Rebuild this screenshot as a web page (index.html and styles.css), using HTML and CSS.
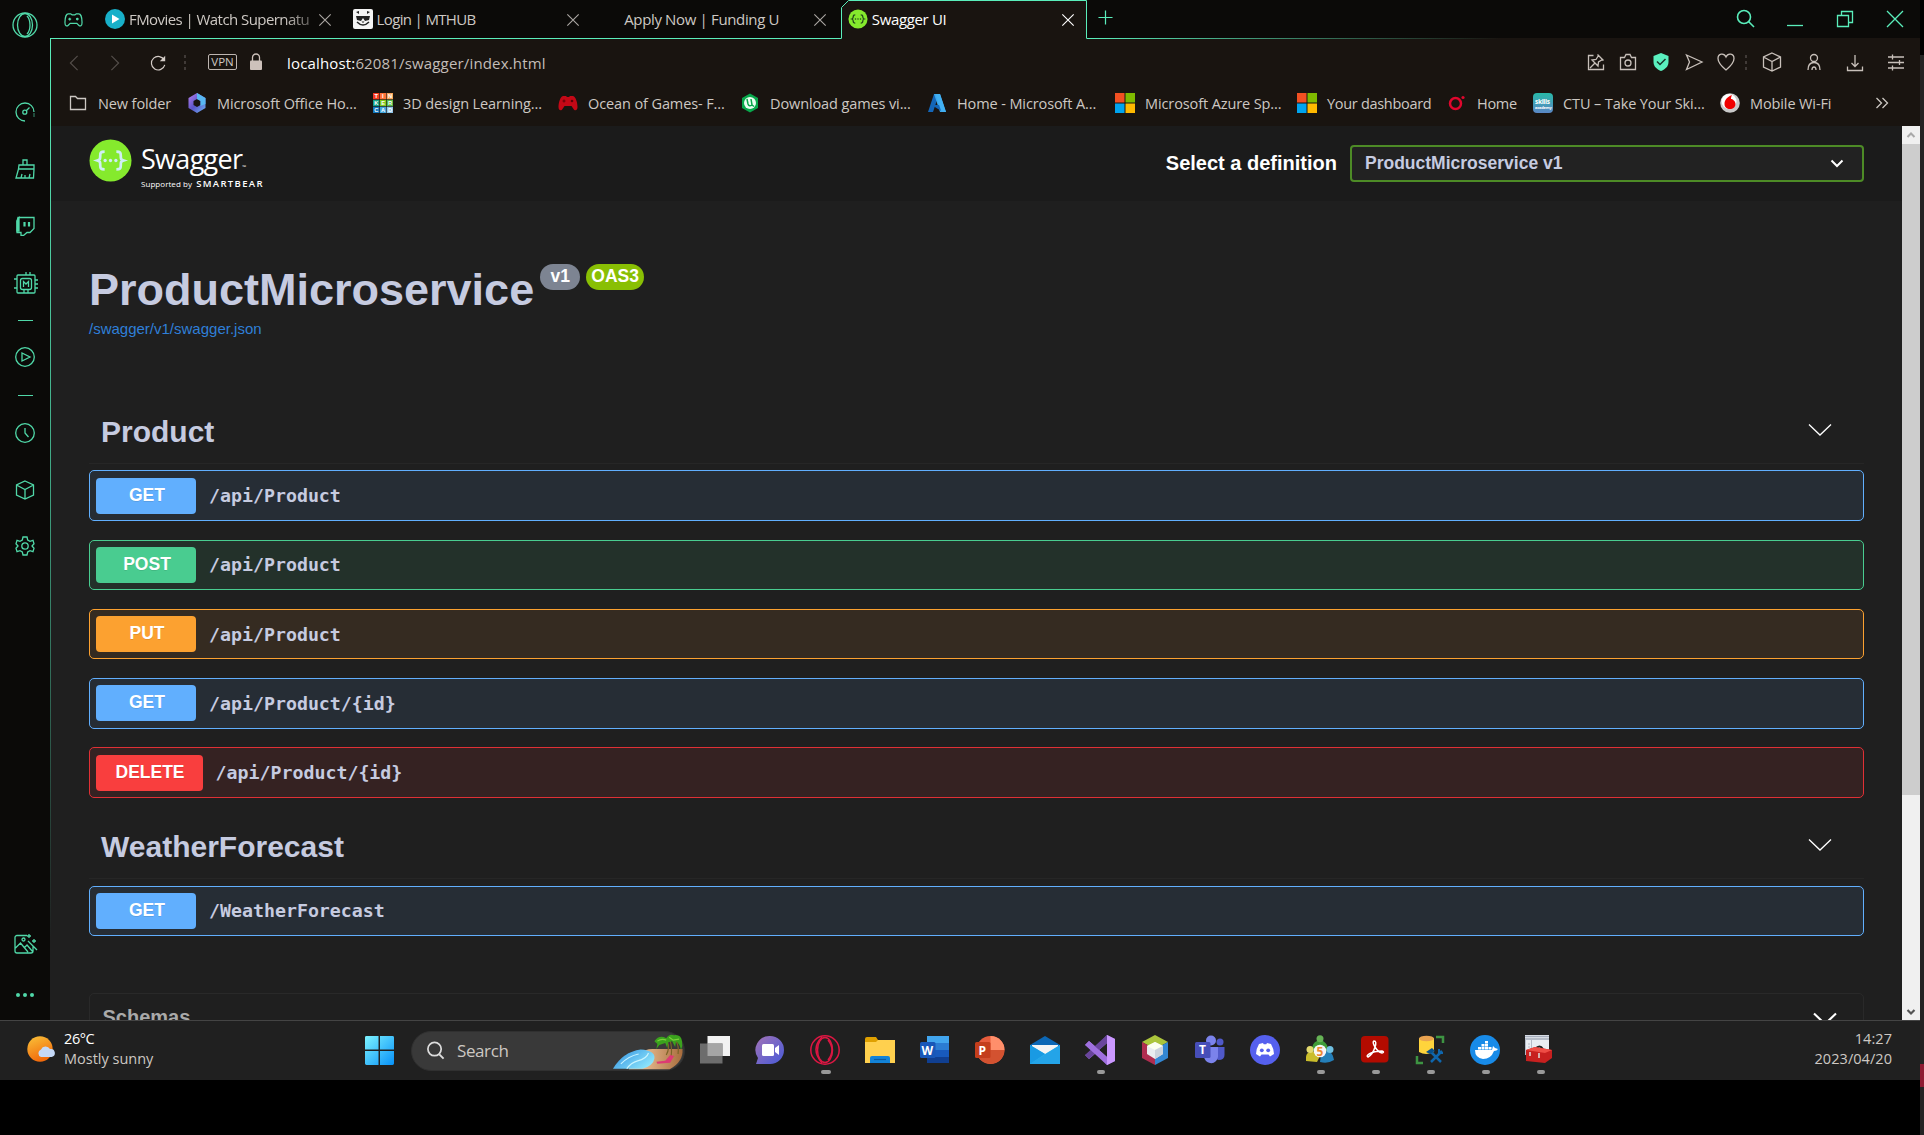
FILE: index.html
```html
<!DOCTYPE html>
<html lang="en">
<head>
<meta charset="utf-8">
<title>Swagger UI</title>
<link rel="stylesheet" href="styles.css">
</head>
<body>
<svg class="defs" width="0" height="0">
  <symbol id="x" viewBox="0 0 16 16"><path d="M1.500 1.500l13 13M14.500 1.500l-13 13"/></symbol>
  <symbol id="cube" viewBox="0 0 20 20"><path d="M10 1l8.500 4v10L10 19l-8.500-4V5zM1.500 5L10 9.500 18.500 5M10 9.500V19"/></symbol>
  <symbol id="chev" viewBox="0 0 24 14"><path d="M1 1.500l11 10.500L23 1.500"/></symbol>
  <symbol id="pad" viewBox="0 0 20 20"><path d="M5 3h3l1 1h2l1-1h3c3 1 4.500 7 4.500 11 0 4-3 4-4 2l-2-3H6.500l-2 3c-1 2-4 2-4-2C.5 10 2 4 5 3z"/></symbol>
  <symbol id="ms" viewBox="0 0 20 20"><path fill="#f25022" d="M0 0h9.500v9.500H0z"/><path fill="#7fba00" d="M10.500 0H20v9.500h-9.500z"/><path fill="#00a4ef" d="M0 10.500h9.500V20H0z"/><path fill="#ffb900" d="M10.500 10.500H20V20h-9.500z"/></symbol>
  <symbol id="braces" viewBox="0 0 44 44"><path d="M16 13c-4 0-4.500 1-4.500 4 0 3.500 0 4-3 5 3 1 3 1.500 3 5 0 3 .5 4 4.500 4M28 13c4 0 4.500 1 4.500 4 0 3.500 0 4 3 5-3 1-3 1.500-3 5 0 3-.5 4-4.500 4" fill="none" stroke="currentColor" stroke-width="2.800"/><g fill="currentColor"><circle cx="16.500" cy="22" r="1.700"/><circle cx="22" cy="22" r="1.700"/><circle cx="27.500" cy="22" r="1.700"/></g></symbol>
</svg>
<div class="screen">
<div class="desktop">
  <div class="browser">
    <nav class="sidebar">
      <svg class="line s-opera" viewBox="0 0 26 26"><circle cx="13" cy="13" r="12"/><ellipse cx="13" cy="13" rx="7.500" ry="11.500"/><path d="M15 4c4 4 4 14 0 18"/></svg>
      <svg class="line" viewBox="0 0 20 20"><path d="M10 19A9 9 0 1 1 19 10M11.200 8.800L14.500 5.500"/><circle cx="9.800" cy="10.200" r="2"/><path d="M19 11.500v4" stroke-dasharray="1 1"/></svg>
      <svg class="line" viewBox="0 0 20 20"><path d="M8 6V1h4v5M4 6h15v4H3.500zM3.500 10L1 19h17.500l.5-9M6 19l1-4M10 19v-3M14 19l1-4"/></svg>
      <svg class="line" viewBox="0 0 20 20"><path d="M3 1.500h16v11l-4 4h-3l-3.500 3H6v-3H2V5z"/><path d="M2 5l2-3v13H2z" fill="currentColor"/><path d="M9.500 6v4.500M14 6v4.500" stroke-width="2.200"/></svg>
      <svg class="line s-chip" viewBox="0 0 24 24"><rect x="3" y="3" width="18" height="18" rx="1"/><rect x="6.500" y="6.500" width="11" height="11" rx="2"/><path d="M9.500 15V9.500L12 12l2.500-2.500V15M12 3V0M16 3V0M0 7h3M0 16h3M21 8h3M21 12h3M21 16h3M10 21v-3M14 21v-3"/></svg>
      <i class="dash"></i>
      <svg class="line" viewBox="0 0 20 20"><circle cx="10" cy="10" r="9.300"/><path d="M7 6v8l8-4z"/></svg>
      <i class="dash"></i>
      <svg class="line" viewBox="0 0 20 20"><circle cx="10" cy="10" r="9.300"/><path d="M10 5v5l3.500 4"/></svg>
      <svg class="line"><use href="#cube"/></svg>
      <svg class="line" viewBox="0 0 20 20"><path d="M8 1h4l.7 3L15 5.300l3-1 1 3.500L17 10l2 2.200-1 3.500-3-1-2.300 1.300L12 19H8l-.7-3L5 14.700l-3 1-1-3.500L3 10 1 7.800l1-3.500 3 1L7.300 4z"/><circle cx="10" cy="10" r="3.200"/></svg>
      <span></span>
      <svg class="line s-pic" viewBox="0 0 24 20"><path d="M13 1.500H3a2 2 0 0 0-2 2V17a2 2 0 0 0 2 2h14a2 2 0 0 0 2-2V12M1.500 14l5-5L14 18M10 14l3-3 6 7M14 7l9 9M15 0v4M13 2h4M20 5v4M18 7h4"/><circle cx="9.500" cy="5.500" r="1.500"/></svg>
      <svg viewBox="0 0 20 20" fill="currentColor"><circle cx="3" cy="10" r="2"/><circle cx="10" cy="10" r="2"/><circle cx="17" cy="10" r="2"/></svg>
    </nav>
    <div class="main">
      <header class="tabs">
        <svg class="line gx" viewBox="0 0 20 16"><path d="M4.500 1.500h2.500l1.500 1h3l1.500-1h2.500c2 0 3.500 4 3.500 9 0 4-2 4.500-3.500 3l-2-2H6.500l-2 2C3 15 1 14.500 1 10.500c0-5 1.500-9 3.500-9zM6 5.500v3M4.500 7h3"/><circle cx="14" cy="7" r=".8"/></svg>
        <div class="tab"><svg class="fav" viewBox="0 0 20 20"><circle cx="10" cy="10" r="10" fill="#18b0c9"/><path d="M7 5.500v9l7.500-4.500z" fill="#fff"/></svg><span class="fade">FMovies | Watch Supernatu</span><svg class="line cl"><use href="#x"/></svg></div>
        <div class="tab"><svg class="fav" viewBox="0 0 20 20"><rect width="20" height="20" rx="2" fill="#f4f4f4"/><path d="M3 3l3-1v3zM17 3l-3-1v3zM3 7h14l-1 4-4 1-2-3-2 3-4-1z" fill="#222"/><path d="M4 13q6 6 12 0" fill="none" stroke="#222" stroke-width="1.500"/><path d="M8.500 12.500h3L10 14z" fill="#222"/></svg><span class="tight">Login | MTHUB</span><svg class="line cl"><use href="#x"/></svg></div>
        <div class="tab"><i class="fav"></i><span>Apply Now | Funding U</span><svg class="line cl"><use href="#x"/></svg></div>
        <div class="tab active"><svg class="frame" viewBox="0 0 246 39"><path d="M0 39V38.500H.5V7.500L7.500.5H245.500V38.500H246V39z"/><path class="edge" d="M.5 38.500V7.500L7.500.5H245.500V38.500"/></svg><svg class="fav dark" viewBox="0 0 44 44"><circle cx="22" cy="22" r="21" fill="#85ea2d"/><use href="#braces"/></svg><span>Swagger UI</span><svg class="line cl"><use href="#x"/></svg></div>
        <svg class="line plus" viewBox="0 0 16 16"><path d="M8 .5v15M.5 8h15"/></svg>
        <div class="winctl">
          <svg class="line" viewBox="0 0 20 20"><circle cx="9" cy="8" r="6.500" stroke-width="1.600"/><path d="M13.500 12.500L19 18" stroke-width="1.600"/></svg>
          <svg class="line" viewBox="0 0 20 20"><path d="M2 16.500h16"/></svg>
          <svg class="line" viewBox="0 0 20 20"><path d="M2.500 6.500h11v11h-11zM6.500 6.500v-4h11v11h-4"/></svg>
          <svg class="line" viewBox="0 0 20 20"><path d="M2 2l16 16M18 2L2 18"/></svg>
        </div>
      </header>
      <div class="address">
        <svg class="line dim" viewBox="0 0 20 20"><path d="M14 2L6 10l8 8"/></svg>
        <svg class="line dim" viewBox="0 0 20 20"><path d="M6 2l8 8-8 8"/></svg>
        <svg class="line reload" viewBox="0 0 20 20"><path d="M17 7a7.500 7.500 0 1 0 .5 5"/><path d="M18 2v6h-6z" fill="currentColor" stroke="none"/></svg>
        <i class="dots"></i>
        <b class="vpn">VPN</b>
        <svg class="lock" viewBox="0 0 14 18"><rect x="1" y="7.500" width="12" height="9.500" rx="1" fill="#cdc1bb"/><path d="M3.500 8V4.500a3.500 3.500 0 0 1 7 0V8" fill="none" stroke="#cdc1bb" stroke-width="1.300"/></svg>
        <span class="url"><em>localhost:</em>62081/swagger/index.html</span>
        <div class="tools">
          <svg class="line" viewBox="0 0 20 20"><path d="M7.500 3.500h-5v14h15v-5M11.500 2.500l6 6M12.500 3.500l-2.500 4-4 .5 6 6 .5-4 4-2.500M9 11l-5 5"/></svg>
          <svg class="line" viewBox="0 0 20 20"><path d="M2.500 5.500h4l1.500-3h4l1.500 3h4v12h-15z"/><circle cx="10" cy="11" r="3"/></svg>
          <svg viewBox="0 0 20 20"><path d="M10 1l7.500 3v6c0 5-4 7.500-7.500 9-3.500-1.500-7.500-4-7.500-9V4z" fill="#5af0bf"/><path d="M6 9.500l3 3 5.500-5.500" fill="none" stroke="#17352b" stroke-width="1.500"/></svg>
          <svg class="line" viewBox="0 0 20 20"><path d="M2.500 3L18 10 2.500 17.500 5.500 10z"/></svg>
          <svg class="line heart" viewBox="0 0 20 20"><path d="M10 18C4 13 2 10 2 6.500c0-5 6-6 8-1.500 2-4.500 8-3.500 8 1.500C18 10 16 13 10 18z"/></svg>
          <i class="dots"></i>
          <svg class="line"><use href="#cube"/></svg>
          <svg class="line" viewBox="0 0 20 20"><circle cx="10" cy="6" r="3.500"/><path d="M4 18c0-5 2-7.500 6-7.500s6 2.500 6 7.500M8 18c0-2 .5-3 2-3s2 1 2 3"/></svg>
          <svg class="line" viewBox="0 0 20 20"><path d="M10 3v11M6.500 11l3.500 3.500 3.500-3.500M2.500 14.500v4h15v-4"/></svg>
          <svg class="line" viewBox="0 0 20 20"><path d="M2 5h16M2 10.500h16M2 16h16M6.500 2.500v5M13.500 8v5M6.500 13.500v5"/></svg>
        </div>
      </div>
      <div class="bookmarks">
        <a><svg class="line" viewBox="0 0 20 20"><path d="M2.500 3.500h5l2 2h8v11h-15z"/></svg><span class="w73">New folder</span></a>
        <a><svg viewBox="0 0 20 20"><defs><linearGradient id="o1" x2="1" y2="1"><stop stop-color="#b980f0"/><stop offset=".5" stop-color="#5b55c8"/><stop offset="1" stop-color="#6db7f5"/></linearGradient></defs><path d="M10 0l8.500 5v10L10 20l-8.500-5V5zM10 6L6.500 8v4l3.500 2 3.500-2V8z" fill="url(#o1)" fill-rule="evenodd"/><path d="M10 0l8.500 5v6l-5 2V8L10 6z" fill="#58b7f2"/></svg><span class="w140">Microsoft Office Ho...</span></a>
        <a><svg class="tinker" viewBox="0 0 21 21"><path fill="#f33a1f" d="M0 0h6.600v6.600H0z"/><path fill="#ff7139" d="M7.200 0h6.600v6.600H7.200z"/><path fill="#f8a55b" d="M14.400 0H21v6.600h-6.600z"/><path fill="#16a085" d="M0 7.200h6.600v6.600H0z"/><path fill="#82c91e" d="M7.200 7.200h6.600v6.600H7.200z"/><path fill="#55b948" d="M14.400 7.200H21v6.600h-6.600z"/><path fill="#1477be" d="M0 14.400h6.600V21H0z"/><path fill="#42a5dd" d="M7.200 14.400h6.600V21H7.200z"/><path fill="#90c5e8" d="M14.400 14.400H21V21h-6.600z"/><g><text x="1.500" y="5.500">T</text><text x="9.500" y="5.500">I</text><text x="15.700" y="5.500">N</text><text x="1.300" y="12.700">K</text><text x="8.700" y="12.700">E</text><text x="15.700" y="12.700">R</text><text x="1.300" y="19.900">C</text><text x="8.500" y="19.900">A</text><text x="15.700" y="19.900">D</text></g></svg><span class="w139">3D design Learning...</span></a>
        <a><svg viewBox="0 0 20 20"><g fill="#c40816"><use href="#pad"/></g><path d="M4.500 8h3M6 6.500v3" stroke="#5e0008"/><circle cx="14" cy="8" r="1.300" fill="#5e0008"/></svg><span class="w137">Ocean of Games- F...</span></a>
        <a><svg viewBox="0 0 20 20"><path d="M10 .5l8 4.500v10l-8 4.500L2 15V5z" fill="#08a84c"/><circle cx="10" cy="10" r="6" fill="#eafff1"/><path d="M7 6l1 5q1 3 4 1l-1-6M12 12l2 1.500" fill="none" stroke="#08a84c" stroke-width="1.500"/></svg><span class="w141">Download games vi...</span></a>
        <a><svg viewBox="0 0 20 20"><path d="M7 1h5l-6 18H1z" fill="#1466b8"/><path d="M7 1h6l6 18h-6z" fill="#3ba7ee"/><path d="M5 12h9l2 7-9-5.500z" fill="#1466b8"/><path d="M10 6l4.500 13H19L13 1H8.500z" fill="#42b0f2"/></svg><span class="w143">Home - Microsoft A...</span></a>
        <a><svg><use href="#ms"/></svg><span class="w136">Microsoft Azure Sp...</span></a>
        <a><svg><use href="#ms"/></svg><span class="w104">Your dashboard</span></a>
        <a><svg viewBox="0 0 20 20"><circle cx="8.500" cy="10.500" r="5.500" fill="none" stroke="#e0062d" stroke-width="2.500"/><circle cx="16" cy="4.500" r="1.600" fill="#e0062d"/></svg><span class="w40">Home</span></a>
        <a><svg viewBox="0 0 20 20"><defs><linearGradient id="c1" x2="0" y2="1"><stop stop-color="#28b9a8"/><stop offset="1" stop-color="#5b86c5"/></linearGradient></defs><rect width="20" height="20" rx="4" fill="url(#c1)"/><text x="2" y="11" class="sk">skills</text><text x="2" y="16" class="ac">academy</text></svg><span class="w141">CTU – Take Your Ski...</span></a>
        <a><svg viewBox="0 0 20 20"><circle cx="10" cy="10" r="9.800" fill="#c9c9c9"/><circle cx="9" cy="8.500" r="7.500" fill="#fff"/><path d="M12 2c-5 2-7.500 5-7.500 9 0 3.500 2.500 5 5.500 5s5.500-2 5.500-5c0-3-3-5-4.500-5 0-2 .5-3 1-4z" fill="#f00000"/></svg><span class="w85">Mobile Wi-Fi</span></a>
        <svg class="line more" viewBox="0 0 14 12"><path d="M1.500 1l5 5-5 5M7.500 1l5 5-5 5"/></svg>
      </div>
      <div class="viewport">
        <div class="page">
          <div class="topbar">
            <div class="logo">
              <svg class="mark" viewBox="0 0 44 44"><circle cx="22" cy="22" r="21.500" fill="#85ea2d"/><use href="#braces"/></svg>
              <div class="word"><strong>Swagger<small>™</small></strong><span>Supported by <b>SMARTBEAR</b></span></div>
            </div>
            <div class="definition"><label>Select a definition</label><div class="select">ProductMicroservice v1<svg viewBox="0 0 14 9"><path d="M1.500 1.500L7 7l5.500-5.500" fill="none" stroke="#fff" stroke-width="2"/></svg></div></div>
          </div>
          <div class="content">
            <div class="info"><h1>ProductMicroservice</h1><span class="ver">v1</span><span class="ver oas">OAS3</span></div>
            <a class="spec">/swagger/v1/swagger.json</a>
            <section>
              <h2>Product<svg class="line"><use href="#chev"/></svg></h2>
              <div class="op get"><b>GET</b><code>/api/Product</code></div>
              <div class="op post"><b>POST</b><code>/api/Product</code></div>
              <div class="op put"><b>PUT</b><code>/api/Product</code></div>
              <div class="op get"><b>GET</b><code>/api/Product/{id}</code></div>
              <div class="op delete"><b>DELETE</b><code>/api/Product/{id}</code></div>
            </section>
            <section class="weather">
              <h2>WeatherForecast<svg class="line"><use href="#chev"/></svg></h2>
              <div class="op get"><b>GET</b><code>/WeatherForecast</code></div>
            </section>
            <div class="schemas">Schemas<svg class="line"><use href="#chev"/></svg></div>
          </div>
        </div>
        <div class="scroll"><svg viewBox="0 0 18 18"><path d="M5.500 11L9 7.500l3.500 3.500" fill="none" stroke="#a9a9a9" stroke-width="2"/></svg><i></i><svg viewBox="0 0 18 18"><path d="M5.500 8L9 11.500 12.500 8" fill="none" stroke="#555" stroke-width="2.200"/></svg></div>
      </div>
    </div>
  </div>
  <footer class="taskbar">
    <div class="forecast">
      <svg viewBox="0 0 28 28"><defs><linearGradient id="s1" x2=".4" y2="1"><stop stop-color="#f9c33a"/><stop offset="1" stop-color="#f26b0c"/></linearGradient></defs><circle cx="13" cy="13" r="12.700" fill="url(#s1)"/><path d="M14 21a4 4 0 0 1 0-7.500 5 5 0 0 1 9-.5 4 4 0 0 1 1.500 8z" fill="#c5d9f8"/></svg>
      <div><span class="hi">26°C</span><span>Mostly sunny</span></div>
    </div>
    <svg class="start" viewBox="0 0 30 30"><defs><linearGradient id="w1" x2="1" y2="1"><stop stop-color="#7df3ff"/><stop offset="1" stop-color="#0791f8"/></linearGradient></defs><path fill="url(#w1)" d="M1.500 0H14v14H0V1.500Q0 0 1.500 0zM15.500 0h13Q30 0 30 1.500V14H15.500zM0 15.500h14V30H1.500Q0 30 0 28.500zM15.500 15.500H30v13q0 1.500-1.500 1.500h-13z"/></svg>
    <div class="search">
      <svg class="mag" viewBox="0 0 20 20"><circle cx="9" cy="8.500" r="7" fill="none" stroke="#ddd" stroke-width="1.800"/><path d="M14 14l4.500 4.500" stroke="#ddd" stroke-width="2"/></svg>
      <span>Search</span>
      <svg class="beach" viewBox="0 0 72 38"><defs><linearGradient id="b1" x2="1" y2=".6"><stop stop-color="#2d8ee0"/><stop offset="1" stop-color="#8ce4fb"/></linearGradient><linearGradient id="b2" x2="1"><stop stop-color="#ffd9b0"/><stop offset="1" stop-color="#a86c3c"/></linearGradient></defs><path d="M16 37.500Q25 17 40 17h30.500q1 13-13 20.500z" fill="url(#b2)"/><path d="M0 37Q10 20 28 17.500q15 1 14 9-1 7-12 10.500z" fill="url(#b1)"/><path d="M14 37q4-6 11-8 9-2 11-8M8 32q8-8 18-10" fill="none" stroke="#c9f4ff" stroke-width="1.200"/><path d="M54 23q4-7 1-14M66 22q1-8-2-13M59 24q1-9-1-15" fill="none" stroke="#7b6427" stroke-width="1.200"/><path d="M42 9q5-7 12-3 3-5 8-3 7-1 8 6 1 5-1 9-1-6-5-9l-1 6-3-6-4 1-1 6-2-5-6 2-3 4 1-5z" fill="#3ba21d"/><path d="M45 9q4-3 9-1M57 5l4 3 6-1" fill="none" stroke="#7bd03c" stroke-width="1.200"/><path d="M44 30l9-1 5-6 4 1-4 7-13 1" fill="#dd3b73"/></svg>
    </div>
    <div class="apps">
      <span><svg viewBox="0 0 30 30"><path fill="#f2f2f2" d="M7.500 1H30v20H7.500z"/><path fill="#6d6d6d" d="M0 8.500h22.500v20H0z"/><path fill="#a5a5a5" d="M7.500 8.500h15V21h-15z"/></svg></span>
      <span><svg viewBox="0 0 30 30"><defs><linearGradient id="m2" x2=".8" y2=".8"><stop stop-color="#a373b7"/><stop offset="1" stop-color="#595fd2"/></linearGradient></defs><path d="M15 1a14 14 0 0 1 0 28H1l2-6A14 14 0 0 1 15 1z" fill="url(#m2)"/><rect x="7" y="9" width="12" height="12" rx="1.500" fill="#fff"/><path d="M20 13l4-3v10l-4-3z" fill="#fff"/></svg></span>
      <span class="run wide"><svg viewBox="0 0 30 30" fill="none" stroke="#dc1743" stroke-width="1.500"><circle cx="15" cy="15" r="14.200"/><ellipse cx="15" cy="15" rx="7.500" ry="12.500"/><path d="M18 5q8 10 0 20M12 2Q0 14 12 28"/></svg></span>
      <span><svg viewBox="0 0 30 30"><path d="M0 4q0-2 2-2h9l2 3h15q2 0 2 2v5H0z" fill="#dfa000"/><path d="M0 7h11l2-2h17v23H0z" fill="#ffd04e"/><path d="M5 28v-5q0-2 2-2h16q2 0 2 2v5z" fill="#1283d8"/><path d="M9 24.500h12" stroke="#0b5aa0" stroke-width="1.200"/></svg></span>
      <span><svg viewBox="0 0 30 30"><path fill="#41a5ee" d="M7 1h22v7H7z"/><path fill="#2b7cd3" d="M7 8h22v7H7z"/><path fill="#185abd" d="M7 15h22v7H7z"/><path fill="#103f91" d="M7 22h22v6H7z"/><rect x="0" y="7" width="15.500" height="16" rx="1.500" fill="#1857b8"/><text x="1.500" y="19.500" class="g">W</text></svg></span>
      <span><svg viewBox="0 0 30 30"><circle cx="15.500" cy="15" r="14" fill="#e65c3c"/><path d="M15.500 1a14 14 0 0 1 14 14h-14z" fill="#ff8f6b"/><path d="M29.500 15a14 14 0 0 1-27 5l13-5z" fill="#d35230"/><rect x="0" y="7" width="15.500" height="16" rx="1.500" fill="#c43e1c"/><text x="3.500" y="19.500" class="g">P</text></svg></span>
      <span><svg viewBox="0 0 30 30"><path d="M15 1l15 9v3H0v-3z" fill="#0c67b5"/><path d="M2 10h26v9H2z" fill="#f4f4f4"/><path d="M0 10l15 9 15-9v19H0z" fill="#2bb7ee"/><path d="M30 10v19H0z" fill="#24a4e8"/><path d="M0 10l15 9-15 10z" fill="#199ae3"/></svg></span>
      <span class="run"><svg viewBox="0 0 30 30"><path d="M0 10l4-4 7 6L22 0l8 4v22l-8 4L11 18l-7 6-4-4 6-5z" fill="#a77be5"/><path d="M0 10l6 5-6 5zM22 8v14l-8-7z" fill="#212121"/><path d="M0 20l22-20v8L4 24z" fill="#69459c"/><path d="M4 6l18 16v8L0 10z" fill="#9f70df"/><path d="M22 0l8 4v22l-8 4z" fill="#cb98ff"/></svg></span>
      <span><svg viewBox="0 0 30 30"><path d="M15 0l13 7-13 7L2 7z" fill="#abc53c"/><path d="M2 7l13 7v16L2 23z" fill="#b02d50"/><path d="M28 7v16l-13 7V14z" fill="#3387d3"/><path d="M15 7l8 4v8l-8 5-8-5v-8z" fill="#e9edf0"/><path d="M15 7l8 4-8 4-8-4z" fill="#fbfff0"/><path d="M15 15l8-4v8l-8 5z" fill="#ccd4dd"/></svg></span>
      <span><svg viewBox="0 0 30 30"><circle cx="25" cy="7" r="3.500" fill="#5059c9"/><path d="M20 12h9.500v8q0 5-6 5l-4.500-2z" fill="#5059c9"/><circle cx="16" cy="5.500" r="5" fill="#7b83eb"/><path d="M9 12h14v10q-2 7-8 6-5-1-6-6z" fill="#7b83eb"/><rect x="0" y="7" width="15.500" height="16" rx="1.500" fill="#474eb8"/><text x="4" y="19" class="g">T</text></svg></span>
      <span><svg viewBox="0 0 30 30"><circle cx="15" cy="15" r="15" fill="#5560ee"/><path d="M9 9l4-1 .7 1.200h2.600L17 8l4 1q3 5 3 10l-4 2.500-1.500-2h-7l-1.500 2L6 19q0-5 3-10z" fill="#fff"/><circle cx="11.800" cy="15.300" r="1.900" fill="#5560ee"/><circle cx="18.200" cy="15.300" r="1.900" fill="#5560ee"/></svg></span>
      <span class="run"><svg viewBox="0 0 30 30"><path d="M7 15q0-7 5-9 3-2 6 0 5 3 5 9l-5 3h-6z" fill="#3f9b38"/><circle cx="15" cy="3.800" r="3.500" fill="#66b355"/><path d="M1 26q-1-8 4-9l6-1 4 5-3 6z" fill="#cabd2b"/><circle cx="5" cy="14.500" r="3.500" fill="#e3da6f"/><path d="M15 27l1-8 6-3q6 1 7 9-6 4-14 2z" fill="#247fb9"/><circle cx="25" cy="14.500" r="3.500" fill="#6fc0e2"/><circle cx="15" cy="16" r="6.300" fill="#f6f6f6"/><text x="11.500" y="20.500" class="g five">5</text></svg></span>
      <span class="run"><svg viewBox="0 0 30 30"><rect x="1" y="1" width="27.500" height="26.500" rx="4" fill="#b30b00"/><path d="M14 6q3 0 1 6-2 7-7 10-2-1 1-3 5-3 13-3 3 1 0 2-4-1-7-6-3-5-1-6z" fill="none" stroke="#fff" stroke-width="1.500"/></svg></span>
      <span class="run"><svg viewBox="0 0 30 30"><path d="M4 3v14q7 4 15 0V3z" fill="#ffd43c"/><ellipse cx="11.500" cy="3.500" rx="7.500" ry="2.800" fill="#e9a350"/><path d="M21 2h7v6M2 21v7h6" fill="none" stroke="#3d9442" stroke-width="2.500"/><path d="M16 27l11-11M15 16l11 11" stroke="#0f66ad" stroke-width="2.500"/><path d="M11 17l6-4 3 3-5 3z" fill="#064f8d"/><path d="M24 14v4h4" fill="none" stroke="#0f66ad" stroke-width="2"/></svg></span>
      <span class="run"><svg viewBox="0 0 30 30"><circle cx="15" cy="15" r="15" fill="#188be8"/><path d="M5 15h17l1-4 2 2 3 1q-1 2-4 2-3 8-11 8-8-1-8-9zM8 12h3v2.500H8zM11.500 12h3v2.500h-3zM15 12h3v2.500h-3zM18.500 12h3v2.500h-3zM11.500 9h3v2.500h-3zM15 9h3v2.500h-3zM15 6h3v2.500h-3z" fill="#fff"/></svg></span>
      <span class="run"><svg viewBox="0 0 30 30"><path d="M0 0h24v20H0z" fill="#e9edf2"/><path d="M0 1.500h24M0 4h24" stroke="#a5adbc" stroke-width="1.500"/><path d="M6.500 5v11M.5 5v15M3 9h2M3 12h2" stroke="#b4bac6"/><path d="M10 14q5-5 8 0" fill="none" stroke="#222" stroke-width="1.800"/><path d="M1 15l9-3 17 3v8l-7 5-19-2z" fill="#c7201f"/><path d="M1 15l9-3 17 3-7 3z" fill="#ee4d45"/><path d="M5 17v4M14 18v5" stroke="#ddd" stroke-width="1.500"/></svg></span>
    </div>
    <div class="clock"><span>14:27</span><span>2023/04/20</span></div>
  </footer>
</div>
<div class="rim"><i></i></div>
</div>
</body>
</html>
```
FILE: styles.css
```css
* { box-sizing: border-box; }
body { margin: 0; background: #000; font-family: "Open Sans", "Noto Sans", sans-serif; font-size: 15px; color: #cdc8c3; white-space: nowrap; overflow: hidden; }
svg { display: block; flex: none; }
.defs { position: absolute; }
.line { fill: none; stroke: currentColor; stroke-width: 1.3; }
.screen { display: flex; height: 1135px; }
.desktop { width: 1920px; display: flex; flex-direction: column; }
.rim { width: 4px; background: linear-gradient(#000 55px, #242424 55px); padding-top: 1064px; }
.rim i { display: block; height: 23px; background: #8e1b32; }
.browser { display: flex; height: 1020px; }

/* Opera GX sidebar */
.sidebar { width: 50px; padding-right: 1px; background: #0b0a08; color: #50d8a8; display: grid; grid-template-rows: 50px 91px 56px 57px 59px 14px 60px 16px 60px 54px 58px 1fr 53px 50px; justify-items: center; align-items: center; }
.sidebar svg { width: 20px; height: 20px; }
.sidebar svg:nth-child(2) { margin-top: 33px; }
.sidebar .s-opera { width: 26px; height: 26px; margin-left: 1px; }
.sidebar .s-chip { width: 24px; height: 24px; margin-left: 2px; }
.sidebar .s-pic { width: 24px; height: 20px; margin-left: 2px; }
.dash { width: 15px; height: 1px; background: #50d8a8; margin-left: 2px; }

/* Tabs */
.main { flex: 1; display: flex; flex-direction: column; background: #191410; position: relative; }
.main::before { content: ""; position: absolute; left: 0; top: 38px; width: 1px; height: 982px; background: linear-gradient(#5aeebb, #3fa583 45%, #1f1f1f 92%); z-index: 2; }
.tabs { height: 39px; display: flex; align-items: center; background: linear-gradient(90deg, #5aeebb 0, #5aeebb 1040px, #191410 1450px) bottom / 100% 1px no-repeat #0b0a08; }
.gx { width: 19px; height: 16px; margin: 0 15px 0 14px; color: #50d8a8; }
.tab { width: 246px; height: 39px; margin-right: 1.6px; padding: 0 12px 0 7px; display: flex; align-items: center; position: relative; }
.tab > * { position: relative; }
.fav { width: 20px; height: 20px; margin-right: 4px; margin-top: -1px; }
.tab span { flex: 1; letter-spacing: -.35px; margin-top: -2px; }
.tab .tight { letter-spacing: -.65px; }
.tab .fade { letter-spacing: -.56px; -webkit-mask-image: linear-gradient(90deg, #000 82%, rgba(0,0,0,.25)); mask-image: linear-gradient(90deg, #000 82%, rgba(0,0,0,.25)); }
.cl { width: 14px; height: 14px; color: #aaa6a2; }
.active { color: #fff; }
.active .cl { color: #fff; }
.tab .frame { position: absolute; inset: 0; width: 246px; height: 39px; fill: #191410; }
.frame .edge { fill: none; stroke: #5aeebb; }
.dark { color: #23491c; }
.plus { width: 15px; height: 15px; margin: -4px 0 0 10px; color: #5aeebb; }
.winctl { margin-left: auto; margin-right: 15px; display: grid; grid-template-columns: 50px 50px 50px 20px; color: #5aeebb; }
.winctl svg { width: 20px; height: 20px; margin-top: -1px; }

/* Address bar */
.address { height: 47px; display: flex; align-items: center; }
.address > svg { width: 18px; height: 18px; }
.address > svg:first-child { margin-left: 15px; margin-right: 23px; }
.dim { color: #544e4a; }
.reload { margin: 0 17px 0 25px; color: #d5cdc8; }
.dots { width: 2px; height: 15px; background: repeating-linear-gradient(#403a37 0 3px, transparent 3px 6px); }
.vpn { font-size: 11.500px; font-weight: 500; line-height: 14px; height: 16px; width: 29px; text-align: center; border: 1px solid #bdb5b0; border-radius: 2px; margin: -1px 0 0 22px; }
.address .lock { width: 14px; margin: -2px 0 0 12px; }
.url { margin-left: 24px; color: #c3bdb8; letter-spacing: .16px; }
.url em { font-style: normal; color: #fff; }
.tools { margin-left: auto; margin-right: 14px; margin-top: -1px; display: grid; grid-template-columns: 32.500px 33px 33px 32px 29px 17px 41.500px 41px 41.500px 20px; align-items: center; color: #c8c0ba; }
.tools svg { width: 20px; height: 20px; }
.tools .dots { margin-left: 0; }

/* Bookmarks */
.bookmarks { height: 40px; padding-bottom: 6px; padding-left: 18px; display: flex; align-items: center; gap: 16px; letter-spacing: -.11px; font-size: 14.500px; }
.bookmarks a { display: flex; align-items: center; gap: 10px; }
.bookmarks a svg { width: 20px; height: 20px; }
.bookmarks .more { width: 14px; height: 12px; margin-left: 24px; }
.w73 { width: 73px; } .w140 { width: 140px; } .w139 { width: 139px; } .w137 { width: 136px; } .w141 { width: 141px; } .w143 { width: 142px; } .w136 { width: 136px; } .w104 { width: 104px; letter-spacing: -.3px; } .w40 { width: 40px; letter-spacing: -.3px; } .w85 { width: 85px; }
.tinker text { font: bold 6px "Liberation Sans", sans-serif; fill: #fff; letter-spacing: 0; }
.sk { font: bold 6.500px "Open Sans", sans-serif; fill: #fff; letter-spacing: -.3px; }
.ac { font: bold 4px "Open Sans", sans-serif; fill: #fff; letter-spacing: -.2px; }

/* Swagger page */
.viewport { flex: 1; display: flex; min-height: 0; height: 894px; }
.page { flex: 1; overflow: hidden; height: 894px; background: #1f1f1f; font-family: "Liberation Sans", Arial, sans-serif; color: #c6cbe0; }
.topbar { height: 75px; background: #1b1b1b; padding: 0 38px 0 39px; display: flex; justify-content: space-between; }
.logo { display: flex; font-family: "Open Sans", sans-serif; color: #fff; }
.mark { width: 43px; height: 43px; margin: 13px 9px 0 0; color: #cfeef5; }
.word { display: flex; flex-direction: column; }
.word strong { font-size: 27px; font-weight: 400; letter-spacing: -.7px; line-height: 34px; margin-top: 16px; height: 34px; }
.word small { font-size: 5px; }
.word span { font-size: 8px; line-height: 14px; height: 14px; margin-top: 1px; letter-spacing: .05px; }
.word b { font-size: 9.500px; font-weight: 600; letter-spacing: 1.35px; margin-left: 2px; }
.definition { display: flex; align-items: center; gap: 13px; font-weight: 700; }
.definition label { font-size: 20px; color: #fff; }
.select { width: 514px; height: 37px; border: 2px solid #4d8b26; border-radius: 4px; background: #222; font-size: 17.500px; padding: 0 18px 1px 13px; display: flex; align-items: center; justify-content: space-between; }
.select svg { width: 14px; height: 9px; margin-top: 1px; }
.content { padding: 62px 38px 0 39px; }
.info { display: flex; align-items: flex-start; }
h1 { margin: 0 6px 0 0; font-size: 45px; line-height: 54px; height: 52px; }
.ver { height: 26px; width: 40px; border-radius: 13px; background: #7d8492; color: #fff; font-weight: 700; font-size: 17.500px; line-height: 24px; text-align: center; margin: 1px 6px 0 0; }
.oas { width: 58px; background: #89bf04; }
.spec { display: block; font-size: 15px; line-height: 18px; margin-top: 5px; color: #2f7fd8; }
h2 { margin: 0; font-size: 30px; line-height: 34px; height: 49px; padding: 0 33px 14px 12px; display: flex; justify-content: space-between; align-items: center; border-bottom: 1px solid #262626; margin-bottom: 6.400px; }
h2 svg, .schemas svg { width: 24px; height: 14px; color: #fff; stroke-width: 2.100; }
h2 svg { margin-top: -4px; margin-right: -1px; }
section { padding-top: 77px; }
.weather { padding-top: 13.500px; }
.op { height: 50.500px; margin-bottom: 18.750px; border: 1px solid; border-radius: 5px; display: flex; align-items: center; padding-left: 6px; }
.op b { min-width: 100px; height: 36px; line-height: 35px; padding: 0 17px 0 19px; border-radius: 4px; color: #fff; font-size: 17.500px; text-align: center; text-shadow: 0 1px 0 rgba(0,0,0,.1); }
.op code { font: bold 18.250px "DejaVu Sans Mono", monospace; margin-left: 13px; color: #c6cbe0; }
.get { border-color: #61affe; background: #262d35; } .get b { background: #61affe; }
.post { border-color: #49cc90; background: #23312a; } .post b { background: #49cc90; }
.put { border-color: #fca130; background: #352b21; } .put b { background: #fca130; }
.delete { border-color: #e03035; background: #352222; } .delete b { background: #f93e3e; padding: 0 18.500px 0 19.500px; }
.delete code { margin-left: 12.500px; }
.schemas { margin-top: 56.500px; height: 60px; border: 1px solid #292929; border-radius: 5px; font-size: 20px; font-weight: 700; color: #a9a9a9; padding: 12px 26px 0 12.500px; display: flex; justify-content: space-between; align-items: flex-start; }
.schemas svg { margin-top: 6px; }
.scroll { width: 18px; height: 894px; background: #f0f0f0; display: flex; flex-direction: column; }
.scroll svg { width: 18px; height: 18px; }
.scroll i { height: 651px; background: #cdcdcd; margin-bottom: auto; }

/* Windows taskbar */
.taskbar { height: 60px; background: #202020; border-top: 1px solid #444; display: flex; align-items: center; }
.forecast { display: flex; gap: 9px; width: 365px; padding-left: 27px; align-items: center; }
.forecast > svg { width: 28px; height: 28px; margin-top: -1px; }
.forecast span, .clock span { display: block; line-height: 20px; font-size: 14.500px; }
.forecast div, .clock { margin-top: -3px; }
.forecast .hi { color: #fff; letter-spacing: -.4px; }
.start { width: 29px; height: 29px; }
.search { width: 274px; height: 40px; margin-left: 17px; border-radius: 20px; background: #393939; border: 1px solid #303030; display: flex; align-items: center; font-size: 17px; letter-spacing: -.4px; padding-left: 14px; }
.mag { width: 19px; height: 19px; margin-right: 12px; }
.beach { width: 71px; height: 38px; margin-left: auto; }
.apps { display: grid; grid-template-columns: repeat(16, 55px); margin-left: 2.500px; }
.apps span { height: 59px; padding-top: 14px; position: relative; display: flex; justify-content: center; }
.apps svg { width: 30px; height: 30px; }
.run::after { content: ""; position: absolute; top: 49px; left: 24px; width: 8px; height: 4px; border-radius: 2px; background: #999; }
.wide::after { width: 10px; left: 23px; }
.g { font: bold 12px "Open Sans", sans-serif; fill: #fff; }
.five { fill: #ee8a30; }
.clock { margin-left: auto; margin-right: 28px; text-align: right; letter-spacing: .05px; }
```
